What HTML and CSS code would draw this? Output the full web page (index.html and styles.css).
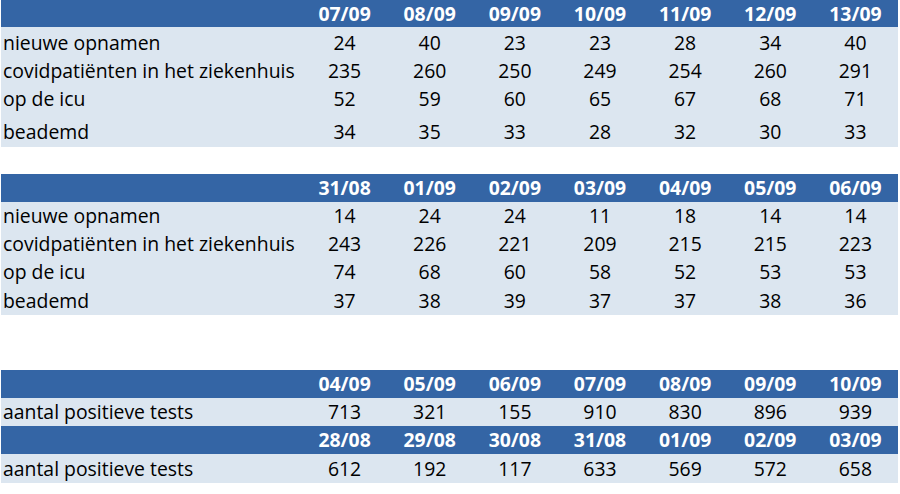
FILE: index.html
```html
<!DOCTYPE html>
<html lang="nl">
<head>
<meta charset="utf-8">
<link rel="stylesheet" href="styles.css">
</head>
<body>
<div class="page">
  <table class="grid t1">
    <colgroup><col class="lab"><col span="7"></colgroup>
    <tr class="head"><th></th><th>07/09</th><th>08/09</th><th>09/09</th><th>10/09</th><th>11/09</th><th>12/09</th><th>13/09</th></tr>
    <tr class="first"><td>nieuwe opnamen</td><td>24</td><td>40</td><td>23</td><td>23</td><td>28</td><td>34</td><td>40</td></tr>
    <tr class="last"><td>covidpatiënten in het ziekenhuis</td><td>235</td><td>260</td><td>250</td><td>249</td><td>254</td><td>260</td><td>291</td></tr>
    <tr><td>op de icu</td><td>52</td><td>59</td><td>60</td><td>65</td><td>67</td><td>68</td><td>71</td></tr>
    <tr class="tall"><td>beademd</td><td>34</td><td>35</td><td>33</td><td>28</td><td>32</td><td>30</td><td>33</td></tr>
  </table>
  <table class="grid t2">
    <colgroup><col class="lab"><col span="7"></colgroup>
    <tr class="head"><th></th><th>31/08</th><th>01/09</th><th>02/09</th><th>03/09</th><th>04/09</th><th>05/09</th><th>06/09</th></tr>
    <tr><td>nieuwe opnamen</td><td>14</td><td>24</td><td>24</td><td>11</td><td>18</td><td>14</td><td>14</td></tr>
    <tr><td>covidpatiënten in het ziekenhuis</td><td>243</td><td>226</td><td>221</td><td>209</td><td>215</td><td>215</td><td>223</td></tr>
    <tr><td>op de icu</td><td>74</td><td>68</td><td>60</td><td>58</td><td>52</td><td>53</td><td>53</td></tr>
    <tr class="last"><td>beademd</td><td>37</td><td>38</td><td>39</td><td>37</td><td>37</td><td>38</td><td>36</td></tr>
  </table>
  <table class="grid t3">
    <colgroup><col class="lab"><col span="7"></colgroup>
    <tr class="head"><th></th><th>04/09</th><th>05/09</th><th>06/09</th><th>07/09</th><th>08/09</th><th>09/09</th><th>10/09</th></tr>
    <tr><td>aantal positieve tests</td><td>713</td><td>321</td><td>155</td><td>910</td><td>830</td><td>896</td><td>939</td></tr>
    <tr class="head"><th></th><th>28/08</th><th>29/08</th><th>30/08</th><th>31/08</th><th>01/09</th><th>02/09</th><th>03/09</th></tr>
    <tr class="last"><td>aantal positieve tests</td><td>612</td><td>192</td><td>117</td><td>633</td><td>569</td><td>572</td><td>658</td></tr>
  </table>
</div>
</body>
</html>
```

FILE: styles.css
```css
html, body {
  margin: 0;
  padding: 0;
  background: #ffffff;
}
.page {
  padding-left: 1px;
  width: 897px;
  font-family: "Open Sans", "Noto Sans", sans-serif;
  font-size: 19.4px;
  color: #000;
}
.grid {
  width: 897px;
  border-collapse: collapse;
  table-layout: fixed;
}
.grid col.lab {
  width: 301px;
}
.grid td, .grid th {
  padding: 0;
  height: 28px;
  line-height: 20px;
  text-align: center;
  vertical-align: middle;
  white-space: nowrap;
  box-sizing: border-box;
}
.grid td {
  background: #dce6f0;
}
.grid td:first-child {
  text-align: left;
  padding-left: 2px;
}
.grid th {
  background: #3465a5;
  color: #ffffff;
  font-weight: 700;
}
.t1 th {
  height: 27px;
}
.grid tr.first td {
  height: 29px;
  padding-top: 2px;
}
.grid tr.tall td {
  height: 34px;
  padding-top: 4px;
}
.grid tr.last td {
  height: 29px;
}
.t2 {
  margin-top: 27px;
}
.t3 {
  margin-top: 55px;
}
```
